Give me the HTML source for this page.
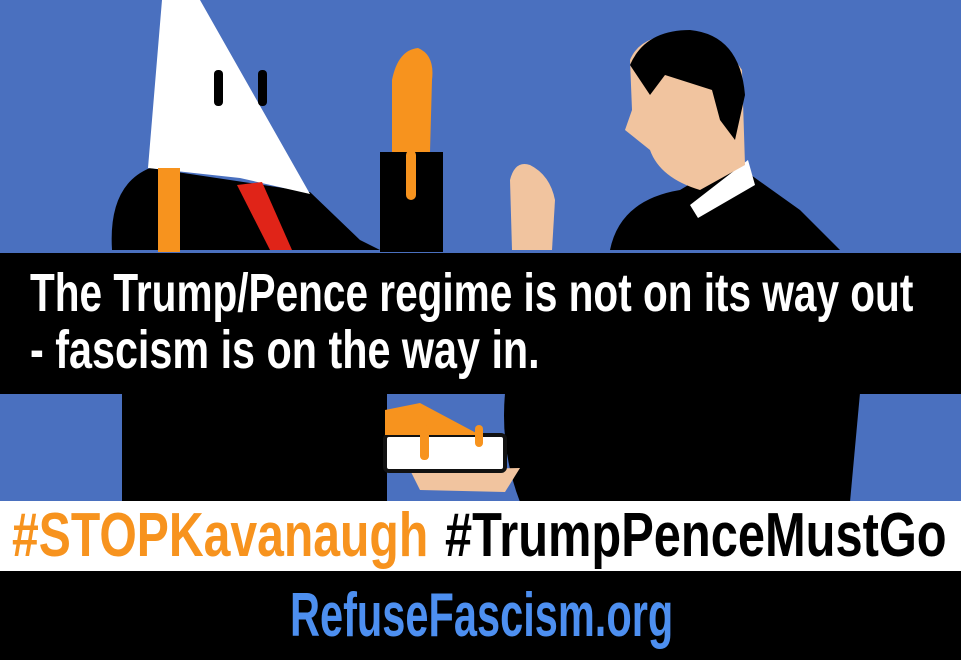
<!DOCTYPE html>
<html><head><style>
html,body{margin:0;padding:0;width:961px;height:660px;overflow:hidden;background:#4a70bf}
.wrap{position:relative;width:961px;height:660px}
svg{position:absolute;left:0;top:0}
.t{position:absolute;font-family:"Liberation Sans",sans-serif;font-weight:bold;white-space:nowrap;transform-origin:0 0}
</style></head><body><div class="wrap">
<svg width="961" height="660" viewBox="0 0 961 660">
<rect width="961" height="660" fill="#4a70bf"/>
<path d="M112 250 Q108 185 150 168 L310 192 L360 240 L380 250 Z" fill="#000"/>
<rect x="122" y="390" width="265" height="112" fill="#000"/>
<rect x="380" y="152" width="63" height="100" fill="#000"/>
<path d="M162 0 L200 0 L310 194 L240 178 L148 168 Z" fill="#fff"/>
<rect x="214" y="70" width="9" height="36" rx="4" fill="#000"/>
<rect x="258" y="70" width="9" height="36" rx="4" fill="#000"/>
<rect x="158" y="168" width="22" height="84" fill="#f7931e"/>
<path d="M237 185 L262 182 L292 250 L270 250 Z" fill="#e02418"/>
<path d="M392 152 L392 80 Q398 50 418 48 Q435 55 432 80 L430 152 Z" fill="#f7931e"/>
<rect x="406" y="150" width="10" height="50" rx="5" fill="#f7931e"/>
<path d="M610 250 Q620 200 680 190 L730 160 L800 210 L840 250 Z" fill="#000"/>
<path d="M690 205 L748 160 L755 185 L698 218 Z" fill="#fff"/>
<path d="M630 60 Q640 35 680 34 Q720 36 742 70 L745 165 L700 190 Q660 178 650 150 L625 130 L632 110 Z" fill="#f1c49f"/>
<path d="M630 65 Q645 30 690 30 Q740 35 745 95 L735 140 L720 120 L712 90 L665 75 L650 95 Z" fill="#000"/>
<path d="M512 250 L510 180 Q515 160 530 165 Q550 175 555 200 L552 250 Z" fill="#f1c49f"/>
<path d="M505 393 L860 393 L850 502 L520 502 Q500 450 505 393 Z" fill="#000"/>
<path d="M410 470 L520 468 L505 492 L420 490 Z" fill="#f1c49f"/>
<rect x="385" y="435" width="120" height="36" rx="4" fill="#fff" stroke="#111" stroke-width="4"/>
<path d="M385 410 L420 403 L480 435 L385 435 Z" fill="#f7931e"/>
<rect x="420" y="425" width="9" height="35" rx="4" fill="#f7931e"/>
<rect x="475" y="425" width="8" height="22" rx="4" fill="#f7931e"/>
<rect x="0" y="253" width="961" height="141" fill="#000"/>
<rect x="0" y="501" width="961" height="70" fill="#fff"/>
<rect x="0" y="571" width="961" height="89" fill="#000"/>
</svg>
<div class="t" style="left:30px;top:262px;font-size:54px;color:#fff;transform:scaleX(0.751)">The Trump/Pence regime is not on its way out</div>
<div class="t" style="left:30px;top:319px;font-size:54px;color:#fff;transform:scaleX(0.765)">- fascism is on the way in.</div>
<div class="t" style="left:12px;top:500px;font-size:62px;color:#f7931e;transform:scaleX(0.776)">#STOPKavanaugh</div>
<div class="t" style="left:445px;top:500px;font-size:62px;color:#000;transform:scaleX(0.787)">#TrumpPenceMustGo</div>
<div class="t" style="left:290px;top:580px;font-size:62px;color:#4d8ff0;transform:scaleX(0.67)">RefuseFascism.org</div>
</div></body></html>
